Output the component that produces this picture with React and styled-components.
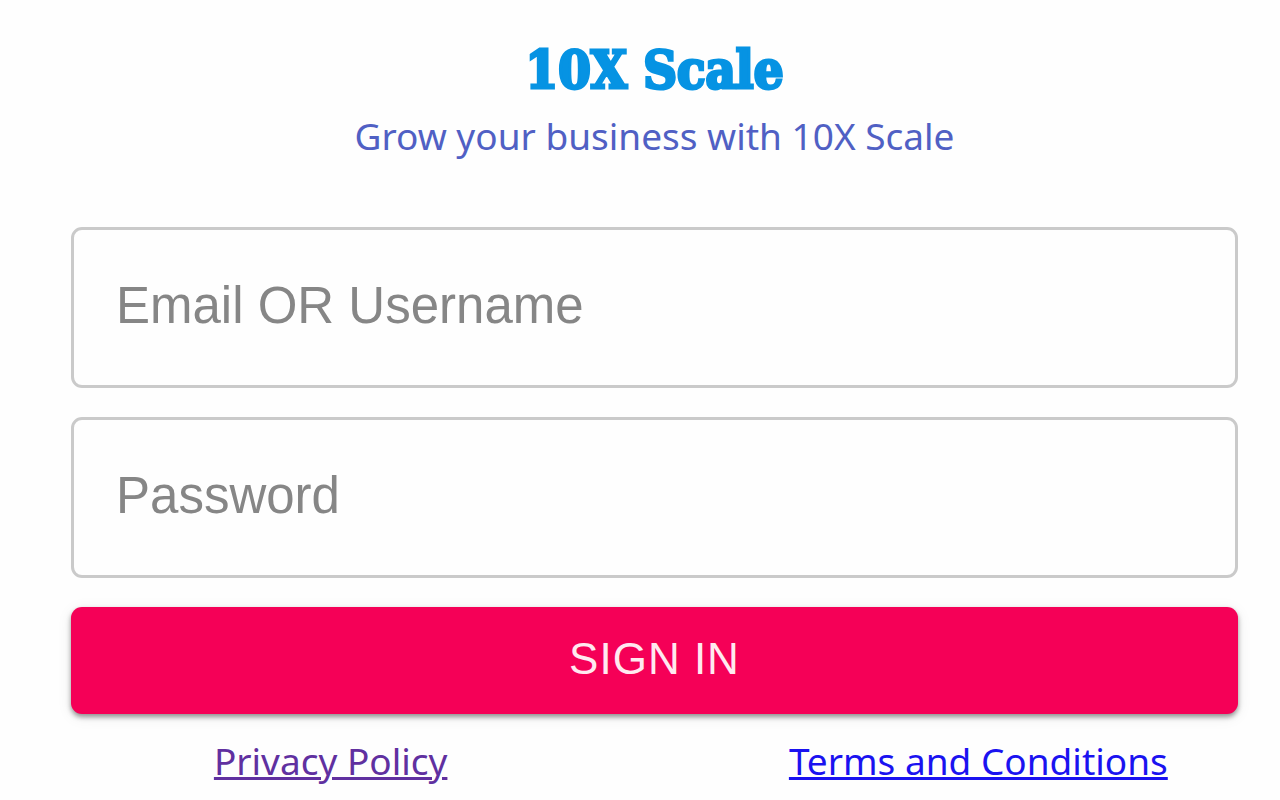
import React, { Component } from 'react';
import styled, { createGlobalStyle } from 'styled-components';


const GlobalStyle = createGlobalStyle`
  * {
    box-sizing: border-box;
  }
  body {
    margin: 0;
    background: #fefefe;
    font-family: 'Noto Sans', sans-serif;
  }
`;

const Page = styled.main`
  padding: 40px 42px 0 71px;
`;

const Header = styled.header`
  text-align: center;
`;

const Title = styled.h1`
  margin: 0;
  color: #0693e3;
  font-family: 'DejaVu Serif Condensed', 'DejaVu Serif', serif;
  font-size: 52px;
  line-height: 60px;
  font-weight: 700;
  -webkit-text-stroke: 3px #0693e3;
`;

const Subtitle = styled.p`
  margin: 6px 0 0;
  color: #5060c4;
  font-size: 37px;
  line-height: 60px;
`;

const Form = styled.form`
  display: flex;
  flex-direction: column;
  gap: 29px;
  margin-top: 61px;
`;

const Field = styled.input`
  width: 100%;
  height: 161px;
  padding: 0 42px 4px;
  border: 3px solid #cacaca;
  border-radius: 11px;
  background: transparent;
  color: #212121;
  font-family: 'Liberation Sans', sans-serif;
  font-size: 51px;

  &::placeholder {
    color: #868686;
    opacity: 1;
  }
`;

const SubmitButton = styled.button`
  height: 107px;
  padding: 0 0 4px;
  border: 0;
  border-radius: 11px;
  background: #f50057;
  box-shadow: 0 3px 5px rgba(0, 0, 0, 0.4), 0 3px 15px rgba(0, 0, 0, 0.08);
  color: #ffe9f0;
  font-family: 'Liberation Sans', sans-serif;
  font-size: 44px;
  letter-spacing: 1px;
  text-transform: uppercase;
`;

const Links = styled.nav`
  display: grid;
  grid-template-columns: 1fr 1fr;
  column-gap: 11%;
  justify-items: center;
  margin-top: 19px;
`;

const PolicyLink = styled.a`
  color: ${props => (props.$visited ? '#6030a0' : '#1a12f0')};
  font-size: 37px;
  line-height: 56px;
  white-space: nowrap;
  text-decoration-thickness: 3px;
`;

export default class App extends Component {
  render() {
    return (
      <Page>
        <GlobalStyle />
        <Header>
          <Title>10X Scale</Title>
          <Subtitle>Grow your business with 10X Scale</Subtitle>
        </Header>
        <Form onSubmit={e => e.preventDefault()}>
          <Field type="text" placeholder="Email OR Username" aria-label="Email OR Username" />
          <Field type="password" placeholder="Password" aria-label="Password" />
          <SubmitButton type="submit">Sign in</SubmitButton>
        </Form>
        <Links>
          <PolicyLink href="#privacy" $visited>Privacy Policy</PolicyLink>
          <PolicyLink href="#terms">Terms and Conditions</PolicyLink>
        </Links>
      </Page>
    )
  }
}
